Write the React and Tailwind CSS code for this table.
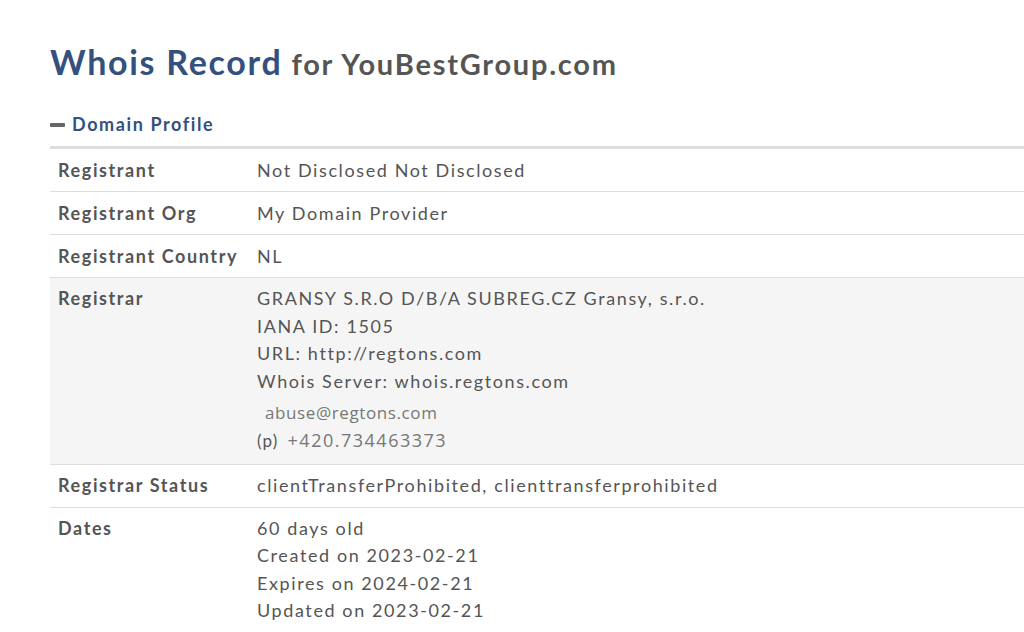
import React from "react";

const rows = [
  { label: "Registrant", value: "Not Disclosed Not Disclosed" },
  { label: "Registrant Org", value: "My Domain Provider" },
  { label: "Registrant Country", value: "NL" },
];

export default function App() {
  return (
    <div className="min-h-[632px] bg-white pl-[50px] font-['Lato',sans-serif] text-[#555]">
      {/* Title */}
      <h1 className="pt-[40px] leading-[44px] font-bold">
        <span className="text-[34px] tracking-[1.7px] text-[#34507f]">Whois Record</span>
        <span className="ml-[9px] text-[29px] tracking-[1.75px] text-[#555]">for YouBestGroup.com</span>
      </h1>

      {/* Section header */}
      <div className="mt-[20px] flex items-center text-[18px] font-bold tracking-[1.6px] text-[#34507f]">
        <span className="mr-[7px] inline-block h-[4px] w-[15px] rounded-[1px] bg-[#666]" />
        Domain Profile
      </div>

      <div className="mt-[8px] border-t-[3px] border-[#ddd]">
        {rows.map((r) => (
          <div key={r.label} className="flex h-[43px] items-center border-b border-[#ddd] text-[18px] tracking-[1.6px]">
            <div className="w-[207px] pl-[8px] font-bold tracking-[1.6px]">{r.label}</div>
            <div>{r.value}</div>
          </div>
        ))}

        {/* Registrar */}
        <div className="flex border-b border-[#ddd] bg-[#f5f5f5] pt-[7px] pb-[10px] text-[18px] leading-[27.5px] tracking-[1.6px]">
          <div className="w-[207px] pl-[8px] font-bold tracking-[1.6px]">Registrar</div>
          <div>
            <div>GRANSY S.R.O D/B/A SUBREG.CZ Gransy, s.r.o.</div>
            <div>IANA ID: 1505</div>
            <div>URL: http://regtons.com</div>
            <div>Whois Server: whois.regtons.com</div>
            <div className="mt-[4px] pl-[8px] font-['Open_Sans',sans-serif] text-[17px] tracking-[0.6px] text-[#777]">abuse@regtons.com</div>
            <div className="flex items-center leading-[27px]">
              <span className="text-[17px] tracking-[1.2px] text-[#555]">(p)</span>
              <span className="ml-[9px] font-['Open_Sans',sans-serif] text-[18px] tracking-[1.5px] text-[#777]">+420.734463373</span>
            </div>
          </div>
        </div>

        {/* Status */}
        <div className="flex h-[43px] items-center border-b border-[#ddd] text-[18px] tracking-[1.6px]">
          <div className="w-[207px] pl-[8px] font-bold tracking-[1.6px]">Registrar Status</div>
          <div>clientTransferProhibited, clienttransferprohibited</div>
        </div>

        {/* Dates */}
        <div className="flex pt-[7px] text-[18px] leading-[27.5px] tracking-[1.6px]">
          <div className="w-[207px] pl-[8px] font-bold tracking-[1.6px]">Dates</div>
          <div>
            <div>60 days old</div>
            <div>Created on 2023-02-21</div>
            <div>Expires on 2024-02-21</div>
            <div>Updated on 2023-02-21</div>
          </div>
        </div>
      </div>
    </div>
  );
}
